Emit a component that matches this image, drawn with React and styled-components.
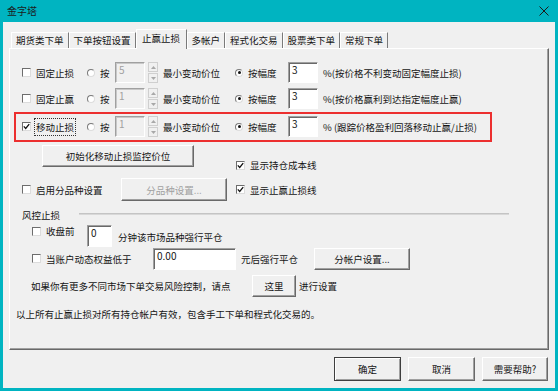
import React from 'react';
import styled, { createGlobalStyle } from 'styled-components';

const TEAL = '#00b4c1';
const FONT = '"Noto Sans CJK SC", "Microsoft YaHei", "Noto Sans", sans-serif';

const GlobalStyle = createGlobalStyle`
  html, body { margin: 0; padding: 0; background: ${TEAL}; }
  body { font-family: ${FONT}; font-size: 9.5px; color: #151515; }
  * { box-sizing: border-box; }
`;

const Window = styled.div`
  width: 558px;
  height: 391px;
  display: flex;
  flex-direction: column;
  background: ${TEAL};
`;

const TitleBar = styled.div`
  height: 22px;
  flex: none;
  display: flex;
  align-items: center;
  justify-content: space-between;
  padding: 0 9px 0 7px;
`;

const Title = styled.span`
  font-size: 10px;
  line-height: 14px;
  color: #1b1b1b;
`;

const Body = styled.div`
  flex: 1;
  margin: 0 3px 3px;
  background: #f0f0f0;
  padding: 7px 6px 0 6px;
  display: flex;
  flex-direction: column;
`;

const TabRow = styled.div`
  height: 19px;
  display: flex;
  align-items: flex-end;
  padding-left: 2px;
  position: relative;
  z-index: 2;
`;

const Tab = styled.div`
  height: ${p => (p.$active ? 20 : 16)}px;
  margin-bottom: ${p => (p.$active ? -1 : 0)}px;
  padding: ${p => (p.$active ? '2px 5.5px 0' : '1px 4px 0')};
  background: #f0f0f0;
  border-top: 1px solid #fff;
  border-left: 1px solid #fff;
  border-right: 1px solid #7a7a7a;
  line-height: 13px;
  white-space: nowrap;
  color: #151515;
`;

const Panel = styled.div`
  height: 302px;
  position: relative;
  z-index: 1;
  border: 1px solid;
  border-color: #fff #696969 #696969 #fff;
  box-shadow: inset -1px -1px 0 #a0a0a0;
  display: flex;
  flex-direction: column;
`;

const Row = styled.div`
  display: flex;
  align-items: ${p => p.$align || 'center'};
  margin-top: ${p => p.$mt || 0}px;
  padding-left: ${p => p.$pl || 0}px;
  height: ${p => (p.$h ? `${p.$h}px` : 'auto')};
`;

const Highlight = styled.div`
  margin: 3px 0 0 4px;
  width: 478px;
  border: 2px solid #ec2f2f;
  padding: 2px 0 3px 6px;
`;

const Label = styled.span`
  line-height: 14px;
  white-space: nowrap;
  flex: none;
  width: ${p => (p.$w ? `${p.$w}px` : 'auto')};
  margin-left: ${p => p.$ml || 0}px;
  margin-top: ${p => p.$mt || 0}px;
  color: ${p => (p.$dim ? '#a0a0a0' : '#151515')};
`;

const CheckLabel = styled.label`
  display: flex;
  align-items: center;
  gap: 5px;
  flex: none;
  line-height: 14px;
  white-space: nowrap;
  width: ${p => (p.$w ? `${p.$w}px` : 'auto')};
  margin-left: ${p => p.$ml || 0}px;
  margin-top: ${p => p.$mt || 0}px;
`;

const FocusText = styled.span`
  outline: 1px dotted #333;
  outline-offset: 1px;
`;

const Box = styled.span`
  width: 9px;
  height: 9px;
  flex: none;
  background: #fff;
  border: 1px solid;
  border-color: #6d6d6d #dcdcdc #dcdcdc #6d6d6d;
  display: flex;
  align-items: center;
  justify-content: center;
`;

const Circle = styled.span`
  width: 8px;
  height: 8px;
  flex: none;
  border-radius: 50%;
  background: #fff;
  border: 1px solid;
  border-color: #7a7a7a #dcdcdc #dcdcdc #7a7a7a;
  display: flex;
  align-items: center;
  justify-content: center;
  &::after {
    content: '';
    display: ${p => (p.$on ? 'block' : 'none')};
    width: 3px;
    height: 3px;
    border-radius: 50%;
    background: #111;
  }
`;

const RadioLabel = styled.label`
  display: flex;
  align-items: center;
  gap: 5px;
  flex: none;
  line-height: 14px;
  white-space: nowrap;
  width: ${p => p.$w}px;
`;

const Field = styled.div`
  flex: none;
  width: ${p => p.$w}px;
  height: ${p => p.$h || 21}px;
  padding: 1px 3px;
  line-height: 12px;
  font-size: 10px;
  border: 1px solid;
  border-color: #a0a0a0 #fff #fff #a0a0a0;
  box-shadow: ${p => (p.$disabled ? 'inset 1px 1px 0 #c8c8c8' : 'inset 1px 1px 0 #696969')};
  background: ${p => (p.$disabled ? '#f0f0f0' : '#fff')};
  color: ${p => (p.$disabled ? '#a0a0a0' : '#151515')};
`;

const SpinCol = styled.div`
  margin-left: 3px;
  width: 10px;
  height: 21px;
  display: flex;
  flex-direction: column;
  gap: 1px;
  flex: none;
`;

const SpinBtn = styled.div`
  flex: 1;
  border: 1px solid #cfcfcf;
  display: flex;
  align-items: center;
  justify-content: center;
`;

const Button = styled.div`
  flex: none;
  width: ${p => p.$w}px;
  height: ${p => p.$h || 22}px;
  display: flex;
  align-items: center;
  justify-content: center;
  background: #f0f0f0;
  border: 1px solid;
  border-color: ${p => (p.$primary ? '#3f3f3f' : '#fff #696969 #696969 #fff')};
  box-shadow: ${p =>
    p.$primary ? 'inset 1px 1px 0 #fff, inset -1px -1px 0 #a0a0a0' : 'inset -1px -1px 0 #a0a0a0'};
  color: ${p => (p.$disabled ? '#a0a0a0' : '#151515')};
  white-space: nowrap;
  line-height: 14px;
`;

const GroupLine = styled.div`
  flex: none;
  width: 430px;
  margin: 5px 0 0 19px;
  border-top: 1px solid #c4c4c4;
  border-bottom: 1px solid #d8d8d8;
`;

const Footer = styled.div`
  display: flex;
  justify-content: flex-end;
  gap: 7px;
  margin-top: 7px;
  padding-right: 1px;
`;

const Check = ({ on }) => (
  <Box>
    {on && (
      <svg width="7" height="7" viewBox="0 0 7 7">
        <path d="M0.8 3.4 L2.7 5.4 L6.2 1.2" fill="none" stroke="#111" strokeWidth="1.3" />
      </svg>
    )}
  </Box>
);

const Spinner = () => (
  <SpinCol>
    <SpinBtn>
      <svg width="5" height="3" viewBox="0 0 5 3"><path d="M0 3 L2.5 0 L5 3Z" fill="#a8a8a8" /></svg>
    </SpinBtn>
    <SpinBtn>
      <svg width="5" height="3" viewBox="0 0 5 3"><path d="M0 0 L2.5 3 L5 0Z" fill="#a8a8a8" /></svg>
    </SpinBtn>
  </SpinCol>
);

const CloseIcon = () => (
  <svg width="10" height="10" viewBox="0 0 10 10">
    <path d="M0.5 0.5 L9.5 9.5 M9.5 0.5 L0.5 9.5" stroke="#1b1b1b" strokeWidth="1" />
  </svg>
);

const StopRow = ({ label, value, amount, note, checked, focus, mt, pl }) => (
  <Row $h={21} $mt={mt} $pl={pl}>
    <CheckLabel $w={65}>
      <Check on={checked} />
      {focus ? <FocusText>{label}</FocusText> : <span>{label}</span>}
    </CheckLabel>
    <RadioLabel $w={28}><Circle />按</RadioLabel>
    <Field $w={30} $disabled>{value}</Field>
    <Spinner />
    <Label $ml={5} $w={72}>最小变动价位</Label>
    <RadioLabel $w={53}><Circle $on />按幅度</RadioLabel>
    <Field $w={30}>{amount}</Field>
    <Label $ml={5}>{note}</Label>
  </Row>
);

const tabs = ['期货类下单', '下单按钮设置', '止赢止损', '多帐户', '程式化交易', '股票类下单', '常规下单'];

export default function App() {
  return (
    <>
      <GlobalStyle />
      <Window>
        <TitleBar>
          <Title>金字塔</Title>
          <CloseIcon />
        </TitleBar>
        <Body>
          <TabRow>
            {tabs.map(t => (
              <Tab key={t} $active={t === '止赢止损'}>{t}</Tab>
            ))}
          </TabRow>
          <Panel>
            <StopRow mt={13} pl={12} label="固定止损" value="5" amount="3" note="%(按价格不利变动固定幅度止损)" />
            <StopRow mt={5} pl={12} label="固定止赢" value="1" amount="3" note="%(按价格赢利到达指定幅度止赢)" />
            <Highlight>
              <StopRow label="移动止损" value="1" amount="3" note="% (跟踪价格盈利回落移动止赢/止损)" checked focus />
            </Highlight>
            <Row $mt={3} $pl={32} $align="flex-start">
              <Button $w={152} $h={22}>初始化移动止损监控价位</Button>
              <CheckLabel $ml={42} $mt={13}><Check on />显示持仓成本线</CheckLabel>
            </Row>
            <Row $mt={6} $pl={12} $h={23}>
              <CheckLabel $w={99}><Check />启用分品种设置</CheckLabel>
              <Button $w={106} $h={23} $disabled>分品种设置...</Button>
              <CheckLabel $ml={9}><Check on />显示止赢止损线</CheckLabel>
            </Row>
            <Row $mt={7} $pl={12} $align="flex-start">
              <Label>风控止损</Label>
              <GroupLine />
            </Row>
            <Row $mt={3} $pl={22} $h={22} $align="flex-start">
              <CheckLabel $w={55} $mt={-1}><Check />收盘前</CheckLabel>
              <Field $w={25} $h={22}>0</Field>
              <Label $ml={6} $mt={5}>分钟该市场品种强行平仓</Label>
            </Row>
            <Row $pl={22} $h={23}>
              <CheckLabel $w={121}><Check />当账户动态权益低于</CheckLabel>
              <Field $w={83} $h={22}>0.00</Field>
              <Label $ml={5} $w={73}>元后强行平仓</Label>
              <Button $w={96} $h={22}>分帐户设置...</Button>
            </Row>
            <Row $mt={5} $pl={21} $h={22}>
              <Label $w={221}>如果你有更多不同市场下单交易风险控制，请点</Label>
              <Button $w={44} $h={22}>这里</Button>
              <Label $ml={3}>进行设置</Label>
            </Row>
            <Row $mt={10} $pl={6}>
              <Label>以上所有止赢止损对所有持仓帐户有效，包含手工下单和程式化交易的。</Label>
            </Row>
          </Panel>
          <Footer>
            <Button $w={67} $h={24} $primary>确定</Button>
            <Button $w={67} $h={24}>取消</Button>
            <Button $w={66} $h={24}>需要帮助?</Button>
          </Footer>
        </Body>
      </Window>
    </>
  );
}
